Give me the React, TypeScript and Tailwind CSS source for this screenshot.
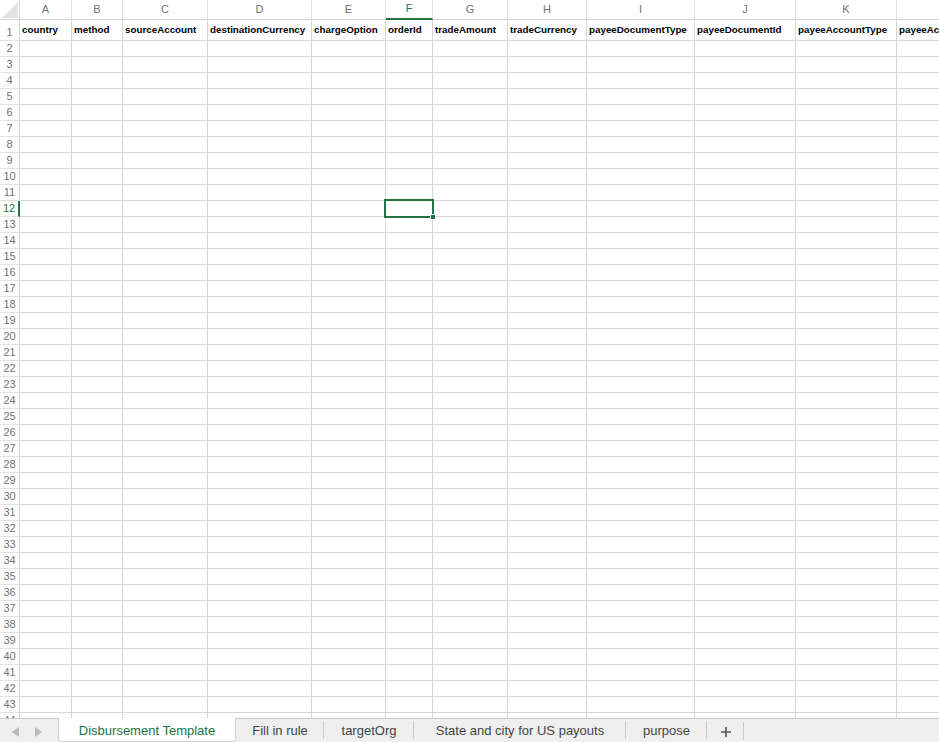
// Spreadsheet view — Excel-style grid with sheet tabs at the bottom
const COLS = [
  { key: "A", w: 52, title: "country" },
  { key: "B", w: 51, title: "method" },
  { key: "C", w: 85, title: "sourceAccount" },
  { key: "D", w: 104, title: "destinationCurrency" },
  { key: "E", w: 74, title: "chargeOption" },
  { key: "F", w: 47, title: "orderId" },
  { key: "G", w: 75, title: "tradeAmount" },
  { key: "H", w: 79, title: "tradeCurrency" },
  { key: "I", w: 108, title: "payeeDocumentType" },
  { key: "J", w: 101, title: "payeeDocumentId" },
  { key: "K", w: 101, title: "payeeAccountType" },
  { key: "L", w: 110, title: "payeeAccountNumber" },
];

const SELECTED_COL = "F";
const SELECTED_ROW = 12;
const ROW_COUNT = 44;

const TABS = [
  { name: "Disbursement Template", w: 178, active: true },
  { name: "Fill in rule", w: 88 },
  { name: "targetOrg", w: 90 },
  { name: "State and city for US payouts", w: 212 },
  { name: "purpose", w: 81 },
];

const font = "font-['Liberation_Sans',Arial,sans-serif]";

function ColumnHeader() {
  return (
    <div className="flex h-[20px] shrink-0">
      <div className="relative h-[20px] w-[20px] shrink-0 border-r border-b border-[#d4d4d4] bg-white">
        <svg className="absolute right-[1px] bottom-[1px]" width="16" height="16" viewBox="0 0 16 16">
          <polygon points="16,0 16,16 0,16" fill="#e3e3e3" />
        </svg>
      </div>
      {COLS.map((c) => {
        const sel = c.key === SELECTED_COL;
        return (
          <div
            key={c.key}
            style={{ width: c.w }}
            className={`flex h-[20px] shrink-0 items-center justify-center border-r border-[#e2e2e2] bg-white text-[11px] ${
              sel
                ? "border-b-2 border-b-[#217346] text-[#217346]"
                : "border-b border-b-[#d4d4d4] text-[#727272]"
            }`}
          >
            <span className="pb-[1px]">{c.key}</span>
          </div>
        );
      })}
    </div>
  );
}

function Row({ n }: { n: number }) {
  const tall = n === 1;
  const sel = n === SELECTED_ROW;
  const h = tall ? "h-[21px]" : "h-[16px]";
  return (
    <div className={`flex shrink-0 ${h}`}>
      <div
        className={`flex w-[20px] shrink-0 items-center justify-center border-b border-[#e2e2e2] bg-white text-[11px] leading-none ${
          sel
            ? "border-r-2 border-r-[#217346] text-[#217346]"
            : "border-r border-r-[#d4d4d4] text-[#727272]"
        } ${h}`}
      >
        <span className={tall ? "pt-[4px]" : ""}>{n}</span>
      </div>
      {COLS.map((c) => (
        <div
          key={c.key}
          style={{ width: c.w }}
          className={`flex shrink-0 items-center overflow-hidden whitespace-nowrap border-r border-b border-[#d6d6d6] pl-[2px] text-[9.8px] font-bold text-black ${h}`}
        >
          {tall ? c.title : null}
        </div>
      ))}
    </div>
  );
}

function SheetTabs() {
  return (
    <div className="flex h-[24px] shrink-0 items-stretch border-t border-[#d0d0d0] bg-[#efefef]">
      <div className="flex w-[58px] shrink-0 items-center gap-[14px] pl-[12px] pt-[2px]">
        <svg width="8" height="10" viewBox="0 0 8 10">
          <polygon points="7,0 7,10 0,5" fill="#b9b9b9" />
        </svg>
        <svg width="8" height="10" viewBox="0 0 8 10">
          <polygon points="1,0 1,10 8,5" fill="#b9b9b9" />
        </svg>
      </div>
      {TABS.map((t) => (
        <div
          key={t.name}
          style={{ width: t.w }}
          className={`relative -mt-px flex shrink-0 items-center justify-center pt-[2px] text-[13px] ${
            t.active
              ? "rounded-b-[4px] border-x border-b border-[#cfcfcf] bg-white text-[#217346]"
              : "text-[#444]"
          }`}
        >
          {t.name}
          {!t.active && (
            <span className="absolute right-0 top-[3px] h-[18px] w-px bg-[#c9c9c9]" />
          )}
        </div>
      ))}
      <div className="relative flex w-[37px] shrink-0 items-center justify-center pt-[2px]">
        <svg width="12" height="12" viewBox="0 0 12 12">
          <path d="M6 1v10M1 6h10" stroke="#555" strokeWidth="1.6" />
        </svg>
        <span className="absolute right-0 top-[3px] h-[18px] w-px bg-[#c9c9c9]" />
      </div>
    </div>
  );
}

export default function App() {
  return (
    <div className={`flex h-[742px] w-[939px] flex-col overflow-hidden bg-white ${font}`}>
      <div className="relative min-h-0 flex-1 overflow-hidden">
        <ColumnHeader />
        {Array.from({ length: ROW_COUNT }, (_, i) => (
          <Row key={i} n={i + 1} />
        ))}
        {/* active cell F12 */}
        <div className="pointer-events-none absolute top-[199px] left-[384px] h-[19px] w-[50px] border-2 border-[#217346]">
          <span className="absolute -right-[4px] -bottom-[4px] h-[6px] w-[6px] border border-white bg-[#217346]" />
        </div>
      </div>
      <SheetTabs />
    </div>
  );
}
